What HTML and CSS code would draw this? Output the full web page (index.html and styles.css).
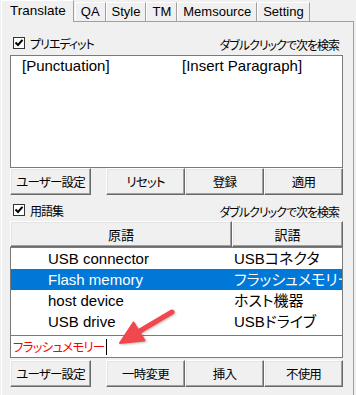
FILE: index.html
```html
<!DOCTYPE html>
<html lang="ja">

<head>
    <meta charset="UTF-8">
    <meta name="viewport" content="width=device-width, initial-scale=1.0">
    <title>Translate</title>
    <link rel="stylesheet" href="styles.css">
</head>

<body>
    <div class="window">
        <div class="tabs">
            <div class="tab active">Translate</div>
            <div class="tab">QA</div>
            <div class="tab">Style</div>
            <div class="tab">TM</div>
            <div class="tab">Memsource</div>
            <div class="tab">Setting</div>
        </div>

        <div class="panel">
            <div class="group-head first">
                <label class="check">
                    <span class="box"><svg width="10" height="10" viewBox="0 0 10 10"><path d="M1.5 4.5 L4 7 L8.5 1.8" fill="none" stroke="#000" stroke-width="2"/></svg></span>
                    プリエディット
                </label>
                <span class="hint">ダブルクリックで次を検索</span>
            </div>

            <div class="listbox pre-list">
                <div class="pre-row">
                    <span class="pre-cell">[Punctuation]</span>
                    <span class="pre-cell">[Insert Paragraph]</span>
                </div>
            </div>

            <div class="btn-row">
                <button class="btn first-btn">ユーザー設定</button>
                <div class="btn-group">
                    <button class="btn">リセット</button>
                    <button class="btn">登録</button>
                    <button class="btn">適用</button>
                </div>
            </div>

            <div class="group-head second">
                <label class="check">
                    <span class="box"><svg width="10" height="10" viewBox="0 0 10 10"><path d="M1.5 4.5 L4 7 L8.5 1.8" fill="none" stroke="#000" stroke-width="2"/></svg></span>
                    用語集
                </label>
                <span class="hint">ダブルクリックで次を検索</span>
            </div>

            <div class="col-head">
                <div class="btn head-src">原語</div>
                <div class="btn head-tgt">訳語</div>
            </div>

            <div class="listbox term-list">
                <div class="term-row">
                    <span class="src">USB connector</span>
                    <span class="tgt">USBコネクタ</span>
                </div>
                <div class="term-row selected">
                    <span class="src">Flash memory</span>
                    <span class="tgt">フラッシュメモリー</span>
                </div>
                <div class="term-row">
                    <span class="src">host device</span>
                    <span class="tgt">ホスト機器</span>
                </div>
                <div class="term-row">
                    <span class="src">USB drive</span>
                    <span class="tgt">USBドライブ</span>
                </div>
            </div>

            <div class="term-input">
                <span class="input-text">フラッシュメモリー</span><span class="caret"></span>
            </div>

            <div class="btn-row">
                <button class="btn first-btn">ユーザー設定</button>
                <div class="btn-group">
                    <button class="btn">一時変更</button>
                    <button class="btn">挿入</button>
                    <button class="btn">不使用</button>
                </div>
            </div>
        </div>

        <!-- callout arrow drawn over the screenshot -->
        <svg class="arrow" width="356" height="395" viewBox="0 0 356 395">
            <line x1="172" y1="312" x2="139" y2="331.5" stroke="#f0484e" stroke-width="5" stroke-linecap="round"/>
            <polygon points="120,343 144.5,340.5 133.5,322.5" fill="#f0484e" stroke="#f0484e" stroke-width="2" stroke-linejoin="round"/>
        </svg>
    </div>
</body>

</html>
```

FILE: styles.css
```css
body {
    margin: 0;
    background: #f0f0f0;
    font-family: "Liberation Sans", "Noto Sans CJK JP", sans-serif;
    font-size: 13px;
    color: #000;
}

.window {
    position: relative;
    width: 356px;
    height: 395px;
    overflow: hidden;
}

/* tab strip */

.tabs {
    display: flex;
    align-items: flex-end;
    height: 21px;
    padding-left: 1px;
}

.tab {
    box-sizing: border-box;
    height: 19px;
    line-height: 18px;
    padding: 0 5px;
    border: 1px solid;
    border-color: #fff #a0a0a0 transparent #fff;
    border-bottom: none;
    background: #f0f0f0;
}

.tab.active {
    position: relative;
    z-index: 1;
    height: 22px;
    line-height: 20px;
    padding: 0 7px 0 8px;
    margin-bottom: -1px;
    margin-right: 1px;
    font-size: 13.5px;
}

.panel {
    width: 353px;
    margin-left: 1px;
    height: 380px;
    box-sizing: border-box;
    border: 1px solid;
    border-color: #a0a0a0 #a0a0a0 transparent #fff;
    padding: 0 10px 0 8px;
}

/* group heading with checkbox */

.group-head {
    display: flex;
    align-items: center;
    justify-content: space-between;
    font-family: "Noto Sans CJK JP", sans-serif;
    font-feature-settings: "palt";
    font-size: 12px;
    letter-spacing: -1px;
}

.group-head.first {
    height: 24px;
    padding-top: 9px;
}

.group-head.second {
    height: 22px;
    padding-top: 4px;
}

.check {
    display: flex;
    align-items: center;
    gap: 5px;
    margin-left: 3px;
}

.box {
    display: flex;
    align-items: center;
    justify-content: center;
    width: 10px;
    height: 10px;
    border: 1px solid #333;
    background: #fff;
}

.hint {
    margin-right: 4px;
    margin-top: 2px;
}

/* list boxes */

.listbox {
    box-sizing: border-box;
    background: #fff;
    border: 1px solid #7a7a7a;
    font-size: 15px;
    overflow: hidden;
}

.pre-list {
    height: 113px;
}

.pre-row {
    display: flex;
    height: 20px;
    line-height: 20px;
    padding-left: 11px;
}

.pre-cell {
    width: 160px;
}

.term-list {
    height: 88px;
    border-bottom: none;
}

.term-row {
    display: flex;
    height: 21px;
    line-height: 21px;
    white-space: nowrap;
    font-feature-settings: "palt";
}

.term-row .src {
    width: 186px;
    padding-left: 37px;
    flex-shrink: 0;
}

.term-row.selected {
    background: #0078d7;
    color: #fff;
}

.term-input {
    box-sizing: border-box;
    height: 23px;
    display: flex;
    align-items: center;
    padding-left: 2px;
    background: #fff;
    border: 1px solid #7a7a7a;
}

.input-text {
    color: #ff0000;
    font-family: "Noto Sans CJK JP", sans-serif;
    font-feature-settings: "palt";
    font-size: 12.5px;
    letter-spacing: -0.8px;
}

.caret {
    width: 1px;
    height: 16px;
    margin-left: 2px;
    background: #000;
}

/* buttons */

.btn-row {
    display: flex;
    height: 27px;
}

.panel .btn-row:last-child {
    margin-top: 2px;
}

.btn-group {
    display: flex;
    margin-left: auto;
}

.btn {
    box-sizing: border-box;
    width: 79px;
    height: 27px;
    padding: 0;
    background: #f0f0f0;
    border: 1px solid;
    border-color: #fff #696969 #696969 #fff;
    box-shadow: inset -1px -1px #a0a0a0, inset 1px 1px #e3e3e3;
    font-family: "Noto Sans CJK JP", sans-serif;
    font-feature-settings: "palt";
    font-size: 12.5px;
    letter-spacing: -0.8px;
    color: #000;
}

.first-btn {
    width: 81px;
}

.col-head {
    display: flex;
    height: 26px;
}

.col-head .btn {
    height: 26px;
    display: flex;
    align-items: center;
    justify-content: center;
    font-size: 13px;
    letter-spacing: 0;
}

.head-src {
    width: 222px;
}

.head-tgt {
    width: 111px;
}

.arrow {
    position: absolute;
    left: 0;
    top: 0;
    pointer-events: none;
    filter: drop-shadow(1px 1px 1px rgba(0, 0, 0, 0.25));
}
```
